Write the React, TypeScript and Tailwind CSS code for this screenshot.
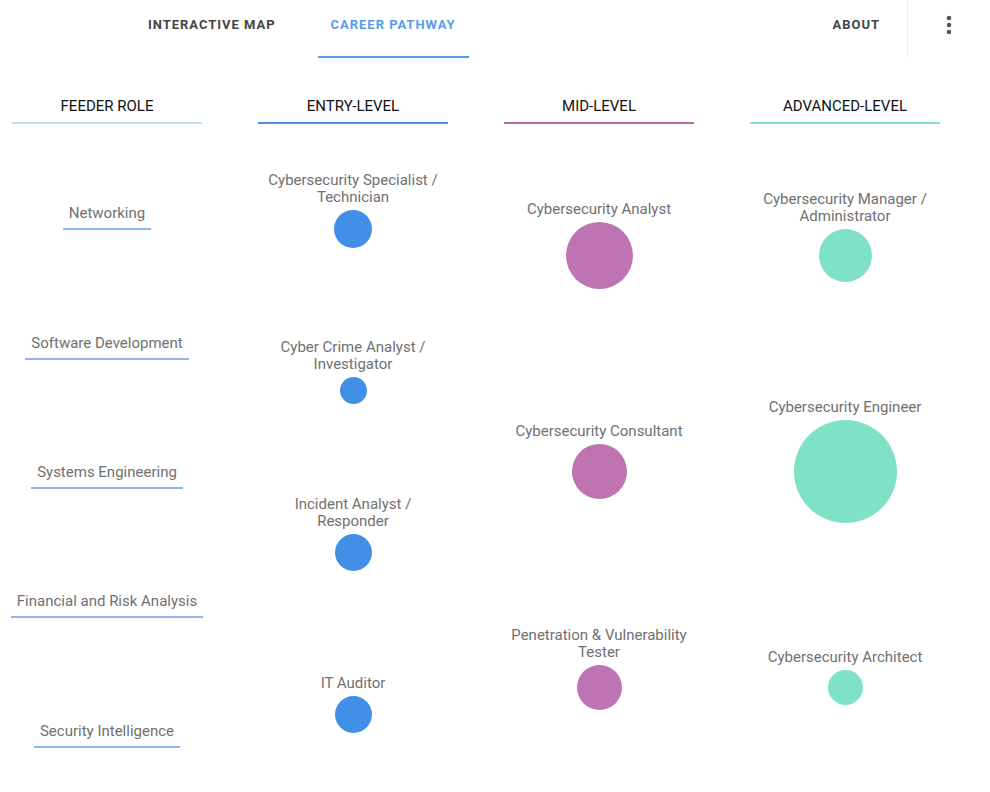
type Role = { title: string; size: string };

type Level = {
  name: string;
  line: string;
  dot: string;
  roles: Role[];
};

const feeders = [
  "Networking",
  "Software Development",
  "Systems Engineering",
  "Financial and Risk Analysis",
  "Security Intelligence",
];

const levels: Level[] = [
  {
    name: "Entry-Level",
    line: "border-[#4a90e2]",
    dot: "bg-[#418fe6]",
    roles: [
      { title: "Cybersecurity Specialist / Technician", size: "size-[38px]" },
      { title: "Cyber Crime Analyst / Investigator", size: "size-[27px]" },
      { title: "Incident Analyst / Responder", size: "size-[37px]" },
      { title: "IT Auditor", size: "size-[37px]" },
    ],
  },
  {
    name: "Mid-Level",
    line: "border-[#b66aa9]",
    dot: "bg-[#be74b0]",
    roles: [
      { title: "Cybersecurity Analyst", size: "size-[67px]" },
      { title: "Cybersecurity Consultant", size: "size-[55px]" },
      { title: "Penetration & Vulnerability Tester", size: "size-[45px]" },
    ],
  },
  {
    name: "Advanced-Level",
    line: "border-[#7fe3c5]",
    dot: "bg-[#7fe2c7]",
    roles: [
      { title: "Cybersecurity Manager / Administrator", size: "size-[53px]" },
      { title: "Cybersecurity Engineer", size: "size-[103px]" },
      { title: "Cybersecurity Architect", size: "size-[35px]" },
    ],
  },
];

function ColumnHead({ name, line }: { name: string; line: string }) {
  return (
    <div
      className={`mt-[40px] mb-[24px] border-b-2 pb-[7px] text-center text-[15px] leading-[17px] uppercase text-[#111] ${line}`}
    >
      {name}
    </div>
  );
}

function NavBar() {
  return (
    <header className="flex h-[58px] items-stretch text-[13px] font-bold tracking-[0.075em] uppercase leading-4">
      <a className="ml-[135px] px-[13px] pt-[17px] text-[#444]">Interactive Map</a>
      <a className="ml-[29px] border-b-2 border-[#5b9ae8] px-[13px] pt-[17px] text-[#5a9be9]">
        Career Pathway
      </a>
      <div className="flex-1" />
      <a className="mr-[14px] px-[13px] pt-[17px] text-[#444]">About</a>
      <div className="flex w-[83px] items-start justify-center border-l border-[#f0f0f0] pt-[15px]">
        <svg width="6" height="20" viewBox="0 0 6 20" fill="#555">
          <circle cx="3" cy="3" r="2.3" />
          <circle cx="3" cy="10" r="2.3" />
          <circle cx="3" cy="17" r="2.3" />
        </svg>
      </div>
    </header>
  );
}

export default function App() {
  return (
    <div className="h-[792px] overflow-hidden bg-white font-['Roboto',sans-serif]">
      <NavBar />
      <main className="flex gap-[56px] pl-[12px]">
        <section className="flex w-[190px] flex-col">
          <ColumnHead name="Feeder Role" line="border-[#bbdefb]" />
          <div className="flex h-[647px] flex-col">
            {feeders.map((f) => (
              <div key={f} className="flex flex-1 items-center justify-center">
                <span className="whitespace-nowrap border-b-2 border-[#8fb6ee] px-1.5 pt-[10px] pb-[6px] text-[15px] leading-[17px] text-[#707070]">
                  {f}
                </span>
              </div>
            ))}
          </div>
        </section>

        {levels.map((lvl) => (
          <section key={lvl.name} className="flex w-[190px] flex-col">
            <ColumnHead name={lvl.name} line={lvl.line} />
            <div className="flex h-[647px] flex-col">
              {lvl.roles.map((r) => (
                <div
                  key={r.title}
                  className="grid flex-1 grid-rows-[1fr_auto_1fr] justify-items-center"
                >
                  <p className="mb-[4px] max-w-[180px] self-end text-center text-[15px] leading-[17px] text-[#707070]">
                    {r.title}
                  </p>
                  <div className={`rounded-full ${r.size} ${lvl.dot}`} />
                  <div />
                </div>
              ))}
            </div>
          </section>
        ))}
      </main>
    </div>
  );
}
